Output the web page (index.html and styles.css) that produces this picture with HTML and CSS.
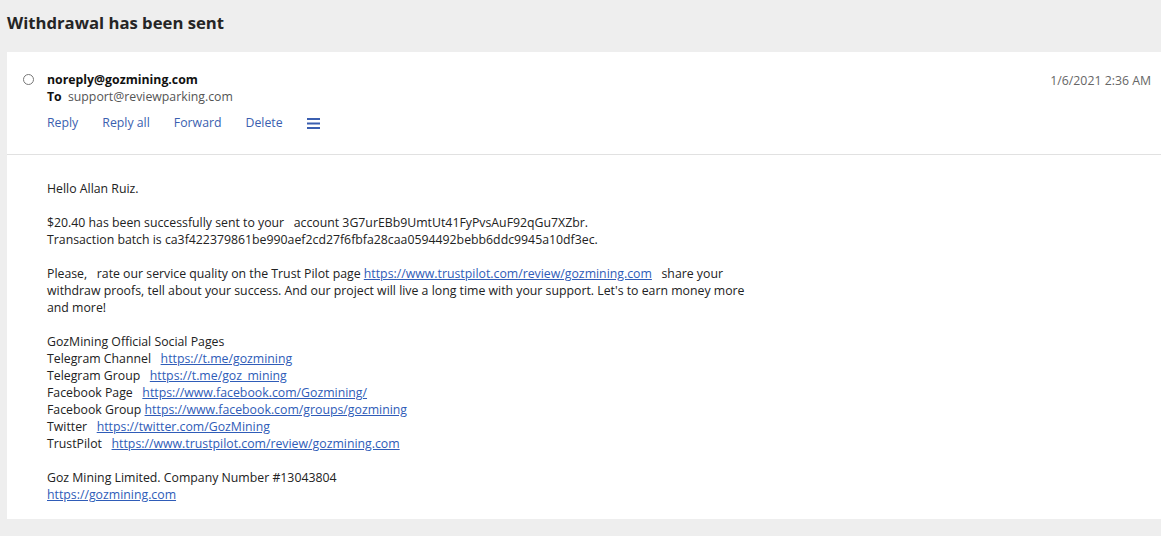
FILE: index.html
```html
<!DOCTYPE html>
<html lang="en">
<head>
    <meta charset="UTF-8">
    <meta name="viewport" content="width=device-width, initial-scale=1.0">
    <title>Withdrawal has been sent</title>
    <link rel="stylesheet" href="styles.css">
</head>
<body>
    <header class="subject">
        <h1>Withdrawal has been sent</h1>
    </header>
    <main class="card">
        <div class="msg-head">
            <span class="radio"></span>
            <div class="meta">
                <div class="from">noreply@gozmining.com</div>
                <div class="to"><b>To</b> support@reviewparking.com</div>
                <div class="actions">
                    <a href="#">Reply</a>
                    <a href="#">Reply all</a>
                    <a href="#">Forward</a>
                    <a href="#">Delete</a>
                    <a href="#" class="more" aria-label="More">
                        <svg width="13" height="12" viewBox="0 0 13 12"><rect x="0" y="1" width="13" height="2" fill="#3b5fb0"/><rect x="0" y="5.5" width="13" height="2" fill="#3b5fb0"/><rect x="0" y="10" width="13" height="2" fill="#3b5fb0"/></svg>
                    </a>
                </div>
            </div>
            <div class="date">1/6/2021 2:36 AM</div>
        </div>
        <div class="msg-body">
            <p>Hello Allan Ruiz.</p>
            <p>$20.40 has been successfully sent to your &nbsp; account 3G7urEBb9UmtUt41FyPvsAuF92qGu7XZbr.<br>
            Transaction batch is ca3f422379861be990aef2cd27f6fbfa28caa0594492bebb6ddc9945a10df3ec.</p>
            <p>Please, &nbsp; rate our service quality on the Trust Pilot page <a href="#">https://www.trustpilot.com/review/gozmining.com</a> &nbsp; share your<br>
            withdraw proofs, tell about your success. And our project will live a long time with your support. Let's to earn money more<br>
            and more!</p>
            <p>GozMining Official Social Pages<br>
            Telegram Channel &nbsp; <a href="#">https://t.me/gozmining</a><br>
            Telegram Group &nbsp; <a href="#">https://t.me/goz_mining</a><br>
            Facebook Page &nbsp; <a href="#">https://www.facebook.com/Gozmining/</a><br>
            Facebook Group <a href="#">https://www.facebook.com/groups/gozmining</a><br>
            Twitter &nbsp; <a href="#">https://twitter.com/GozMining</a><br>
            TrustPilot &nbsp; <a href="#">https://www.trustpilot.com/review/gozmining.com</a></p>
            <p>Goz Mining Limited. Company Number #13043804<br>
            <a href="#">https://gozmining.com</a></p>
        </div>
    </main>
</body>
</html>
```

FILE: styles.css
```css
body {
    margin: 0;
    font-family: "Open Sans", "Noto Sans", Arial, sans-serif;
    font-size: 12.3px;
    background: #eeeeee;
    color: #222;
}

.subject {
    height: 52px;
    padding: 0 7px;
    box-sizing: border-box;
}

.subject h1 {
    margin: 0;
    padding-top: 11px;
    font-size: 16.7px;
    font-weight: 700;
    line-height: 24px;
    color: #252525;
}

.card {
    margin-left: 7px;
    background: #fff;
}

.msg-head {
    display: flex;
    align-items: flex-start;
    padding: 19px 10px 23px 16px;
    border-bottom: 1px solid #e1e1e1;
    line-height: 17px;
}

.radio {
    width: 9px;
    height: 9px;
    margin-top: 3px;
    border: 1px solid #777;
    border-radius: 50%;
    flex-shrink: 0;
}

.meta {
    margin-left: 13px;
    flex-grow: 1;
}

.from {
    font-weight: 700;
    color: #111;
}

.to {
    color: #555;
}

.to b {
    color: #111;
    margin-right: 3px;
}

.actions {
    display: flex;
    align-items: center;
    gap: 24px;
    margin-top: 9px;
}

.actions a {
    color: #3b5fb0;
    text-decoration: none;
}

.actions .more {
    display: flex;
}

.date {
    color: #666;
    margin-top: 1px;
}

.msg-body {
    padding: 25px 40px 16px;
    line-height: 17px;
    color: #222;
}

.msg-body p {
    margin: 0 0 17px;
}

.msg-body p:last-child {
    margin-bottom: 0;
}

.msg-body a {
    color: #2f5cb8;
}
```
